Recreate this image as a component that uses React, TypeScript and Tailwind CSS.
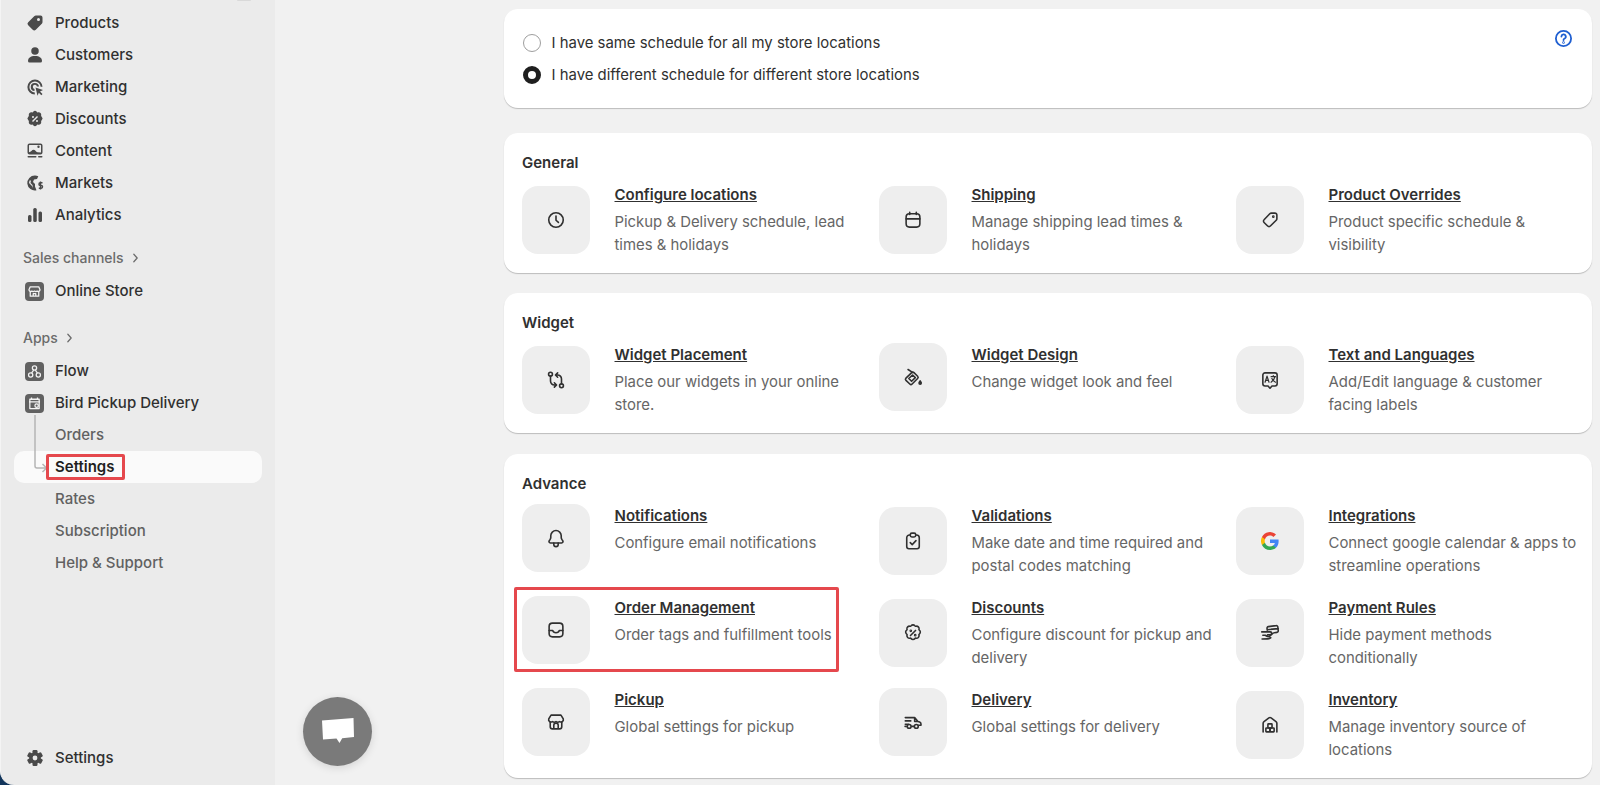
import type { ReactNode } from "react";

// line icons drawn on a 20 box, same weight as the admin icon set
function Line({ children }: { children: ReactNode }) {
  return (
    <svg viewBox="0 0 20 20" className="h-[22px] w-[22px]" fill="none" stroke="#303030" strokeWidth="1.450" strokeLinecap="round" strokeLinejoin="round">
      {children}
    </svg>
  );
}

function Solid({ children }: { children: ReactNode }) {
  return (
    <svg viewBox="0 0 20 20" className="h-5 w-5" fill="#4a4a4a">
      {children}
    </svg>
  );
}

const GoogleIcon = (
  <svg viewBox="0 0 24 24" className="h-[18px] w-[18px]">
    <path fill="#4285F4" d="M23.5 12.3c0-.8-.1-1.600-.2-2.300H12v4.500h6.500a5.500 5.500 0 0 1-2.400 3.600v3h3.900c2.200-2.100 3.500-5.100 3.500-8.800Z" />
    <path fill="#34A853" d="M12 24c3.200 0 6-1.100 8-2.900l-3.900-3c-1.100.7-2.500 1.200-4.100 1.200-3.100 0-5.800-2.100-6.700-5H1.300v3.100A12 12 0 0 0 12 24Z" />
    <path fill="#FBBC05" d="M5.300 14.300a7.200 7.200 0 0 1 0-4.600V6.600h-4a12 12 0 0 0 0 10.800l4-3.100Z" />
    <path fill="#EA4335" d="M12 4.800c1.800 0 3.300.6 4.600 1.800l3.400-3.400A12 12 0 0 0 1.300 6.600l4 3.100c.9-2.800 3.600-4.900 6.700-4.900Z" />
  </svg>
);

const icons: Record<string, ReactNode> = {
  clock: (
    <Line>
      <circle cx="10" cy="10" r="6.600" />
      <path d="M10 6.300v3.900l2.200 2" />
    </Line>
  ),
  calendar: (
    <Line>
      <rect x="3.750" y="4.250" width="12.500" height="12.250" rx="3" />
      <path d="M3.750 9h12.500M7 3v2M13 3v2" />
    </Line>
  ),
  tag: (
    <Line>
      <path d="M11.200 3.750h3.300a1.750 1.750 0 0 1 1.750 1.750v3.300a2 2 0 0 1-.6 1.400l-5.300 5.300a1.750 1.750 0 0 1-2.500 0L4.600 12.250a1.750 1.750 0 0 1 0-2.500l5.200-5.400a2 2 0 0 1 1.400-.6Z" />
      <circle cx="13" cy="7" r=".5" />
    </Line>
  ),
  placement: (
    <Line>
      <circle cx="5" cy="4.750" r="1.750" />
      <circle cx="15" cy="15.250" r="1.750" />
      <path d="M5 6.500v4.500a3.500 3.500 0 0 0 3.500 3.500H10M8.500 12.500l2 2-2 2M15 13.500V9a3.500 3.500 0 0 0-3.500-3.500H10M11.500 3.500l-2 2 2 2" />
    </Line>
  ),
  paint: (
    <Line>
      <path d="M3.600 11 8.800 6a1.500 1.500 0 0 1 2.100 0l3.300 3.300a1.500 1.500 0 0 1 0 2.100l-5 5a1.500 1.500 0 0 1-2.100 0l-3.500-3.300a1.500 1.500 0 0 1 0-2.100Z" />
      <path d="M6.200 11.400 9.600 8.200l2.500 2.400-3.400 3.300ZM5.500 3.200l4.400 2.800" />
      <path d="M16.500 13.500c.6.900 1 1.500 1 2a1 1 0 0 1-2 0c0-.5.400-1.100 1-2Z" fill="#303030" />
    </Line>
  ),
  language: (
    <Line>
      <path d="M5.500 3.500h9a2 2 0 0 1 2 2v8a2 2 0 0 1-2 2h-2.700L10 17.500l-1.800-2H5.500a2 2 0 0 1-2-2v-8a2 2 0 0 1 2-2Z" />
      <path strokeWidth="1.100" d="m5.500 12 1.800-5.500L9.100 12M6.100 10.400h2.400M11 7h4M13 6v1M14.500 7c-.4 2-1.700 3.800-3.500 5M11.700 8.700c.7 1.500 2 2.700 3.300 3.300" />
    </Line>
  ),
  bell: (
    <Line>
      <path d="M10 3.250a4.750 4.750 0 0 0-4.750 4.750v1.600c0 .7-.3 1.300-.7 1.900l-.7 1c-.6.900 0 2 1 2h10.300c1 0 1.600-1.100 1-2l-.7-1c-.4-.6-.7-1.200-.7-1.900V8A4.750 4.750 0 0 0 10 3.250Z" />
      <path d="M8 14.500v1.300a2 2 0 0 0 4 0v-1.300" />
    </Line>
  ),
  clipboard: (
    <Line>
      <path d="M7.500 4.500h-.7a2.500 2.500 0 0 0-2.500 2.500v8a2 2 0 0 0 2 2h7.400a2 2 0 0 0 2-2V7a2.500 2.500 0 0 0-2.500-2.500h-.7" />
      <rect x="7.500" y="2.800" width="5" height="3.500" rx="1.500" />
      <path d="m7.500 11.500 1.800 1.800 3.400-3.600" />
    </Line>
  ),
  badge: (
    <Line>
      <path d="M8.300 3.400a2.300 2.300 0 0 1 3.400 0l.5.500.8-.1a2.300 2.300 0 0 1 2.500 2.500l-.1.700.5.500a2.300 2.300 0 0 1 0 3.400l-.5.500.1.800a2.300 2.300 0 0 1-2.500 2.500l-.8-.1-.5.500a2.300 2.300 0 0 1-3.400 0l-.5-.5-.8.100a2.300 2.300 0 0 1-2.500-2.500l.1-.8-.5-.5a2.300 2.300 0 0 1 0-3.400l.5-.5-.1-.7a2.300 2.300 0 0 1 2.500-2.500l.8.100.5-.5Z" />
      <path d="m12.300 7.700-4.600 4.600" />
      <circle cx="8" cy="8" r=".5" />
      <circle cx="12" cy="12" r=".5" />
    </Line>
  ),
  inbox: (
    <Line>
      <rect x="3.750" y="3.750" width="12.500" height="12.500" rx="3" />
      <path d="M3.750 10.500H7c.4 1.300 1.500 2 3 2s2.600-.7 3-2h3.250" />
    </Line>
  ),
  hand: (
    <Line>
      <path d="M7.500 7.500 7.300 5.800a1.400 1.400 0 0 1 1.200-1.600l7-.9a1.400 1.400 0 0 1 1.600 1.200l.4 3.300a1.400 1.400 0 0 1-1.200 1.600l-2.300.3M7.500 7 17.500 6" />
      <path d="M2.500 9h7.700a1.300 1.300 0 0 1 0 2.600H7.800M3.500 12h2.200l2 1.200h1.800l3.500-3.200M2.800 15.500l4.700-.2c1.200 0 2.200-.4 3.200-1" />
    </Line>
  ),
  store: (
    <Line>
      <path d="M5.500 3.750h9l2.100 3.400a2.200 2.200 0 0 1-3.300 2.500 2.800 2.800 0 0 1-3.300 0 2.800 2.800 0 0 1-3.300 0 2.200 2.200 0 0 1-3.300-2.500l2.100-3.400Z" />
      <path d="M4.750 10v4.250a2 2 0 0 0 2 2h6.500a2 2 0 0 0 2-2V10M8 16.250V13a2 2 0 0 1 4 0v3.250" />
    </Line>
  ),
  truck: (
    <Line>
      <path d="M3 6h8.500l3 3.500 1.500.5c.8.300 1.250 1 1.250 1.800v1.200H15M11.500 6v3.500h3M3 9h5M3 12h3M2.800 14h1M9 14h2" />
      <circle cx="6.500" cy="14" r="1.750" />
      <circle cx="13" cy="14" r="1.750" />
    </Line>
  ),
  warehouse: (
    <Line>
      <path d="M3.750 16.250V8.500a2 2 0 0 1 .8-1.600L9 3.600a1.700 1.700 0 0 1 2 0l4.450 3.300a2 2 0 0 1 .8 1.600v7.750" />
      <rect x="6.250" y="12.750" width="3.750" height="3.500" rx=".5" />
      <rect x="10" y="12.750" width="3.750" height="3.500" rx=".5" />
      <rect x="8.100" y="9" width="3.750" height="3.750" rx=".5" />
    </Line>
  ),
  google: GoogleIcon,
};

type Item = { icon: string; title: string; desc: string };

const general: Item[] = [
  { icon: "clock", title: "Configure locations", desc: "Pickup & Delivery schedule, lead times & holidays" },
  { icon: "calendar", title: "Shipping", desc: "Manage shipping lead times & holidays" },
  { icon: "tag", title: "Product Overrides", desc: "Product specific schedule & visibility" },
];

const widget: Item[] = [
  { icon: "placement", title: "Widget Placement", desc: "Place our widgets in your online store." },
  { icon: "paint", title: "Widget Design", desc: "Change widget look and feel" },
  { icon: "language", title: "Text and Languages", desc: "Add/Edit language & customer facing labels" },
];

const advance: Item[] = [
  { icon: "bell", title: "Notifications", desc: "Configure email notifications" },
  { icon: "clipboard", title: "Validations", desc: "Make date and time required and postal codes matching" },
  { icon: "google", title: "Integrations", desc: "Connect google calendar & apps to streamline operations" },
  { icon: "inbox", title: "Order Management", desc: "Order tags and fulfillment tools" },
  { icon: "badge", title: "Discounts", desc: "Configure discount for pickup and delivery" },
  { icon: "hand", title: "Payment Rules", desc: "Hide payment methods conditionally" },
  { icon: "store", title: "Pickup", desc: "Global settings for pickup" },
  { icon: "truck", title: "Delivery", desc: "Global settings for delivery" },
  { icon: "warehouse", title: "Inventory", desc: "Manage inventory source of locations" },
];

const navTop: { label: string; icon: ReactNode }[] = [
  {
    label: "Products",
    icon: (
      <Solid>
        <path d="M11 2.500h4.500A2 2 0 0 1 17.500 4.500V9a2.500 2.500 0 0 1-.7 1.800l-6 6a2.200 2.200 0 0 1-3.100 0l-4.500-4.500a2.200 2.200 0 0 1 0-3.100l6-6A2.500 2.500 0 0 1 11 2.500Zm2.500 5.500a1.500 1.500 0 1 0 0-3 1.500 1.500 0 0 0 0 3Z" fillRule="evenodd" />
      </Solid>
    ),
  },
  {
    label: "Customers",
    icon: (
      <Solid>
        <circle cx="10" cy="6" r="3.750" />
        <path d="M3 16c0-3 2.500-5 7-5s7 2 7 5a1.500 1.500 0 0 1-1.500 1.500h-11A1.500 1.500 0 0 1 3 16Z" />
      </Solid>
    ),
  },
  {
    label: "Marketing",
    icon: (
      <Solid>
        <path d="M10 2.500a7.500 7.500 0 0 1 7.500 7.300h-1.900A5.600 5.600 0 1 0 9.800 15.600v1.900A7.500 7.500 0 0 1 10 2.500Z" />
        <path d="M10 6a4 4 0 0 1 4 3.500h-2A2.100 2.100 0 1 0 9.500 12v2A4 4 0 0 1 10 6Z" />
        <path d="m10.500 10.500 7.500 2.500-3 1.500 2.500 2.500-1.200 1.200-2.500-2.500-1.300 3-2-8.200Z" />
      </Solid>
    ),
  },
  {
    label: "Discounts",
    icon: (
      <Solid>
        <path fillRule="evenodd" d="M8.200 2.800a2.500 2.500 0 0 1 3.600 0l.6.600.9-.1a2.500 2.500 0 0 1 2.900 2.900l-.1.900.6.600a2.500 2.500 0 0 1 0 3.600l-.6.600.1.900a2.500 2.500 0 0 1-2.900 2.900l-.9-.1-.6.600a2.500 2.500 0 0 1-3.600 0l-.6-.6-.9.100a2.500 2.500 0 0 1-2.900-2.900l.1-.9-.6-.6a2.500 2.500 0 0 1 0-3.600l.6-.6-.1-.9a2.500 2.500 0 0 1 2.900-2.900l.9.100.6-.6ZM12 7l-5 5 1 1 5-5-1-1ZM8 9a1 1 0 1 0 0-2 1 1 0 0 0 0 2Zm4 4a1 1 0 1 0 0-2 1 1 0 0 0 0 2Z" />
      </Solid>
    ),
  },
  {
    label: "Content",
    icon: (
      <Solid>
        <path fillRule="evenodd" d="M4.500 2.500h11A2 2 0 0 1 17.500 4.500v7a2 2 0 0 1-2 2h-11a2 2 0 0 1-2-2v-7a2 2 0 0 1 2-2ZM4 11.300c2-.3 3-2.500 4.500-2.500 1.700 0 2.300 2 4 2.500l3.500.2V4.500a.5.500 0 0 0-.5-.5h-11a.5.500 0 0 0-.5.500v6.800Zm9.500-4.300a1.200 1.200 0 1 0 0-2.400 1.200 1.200 0 0 0 0 2.400Z" />
        <rect x="2.500" y="15" width="9" height="1.500" rx=".75" />
        <rect x="13" y="15" width="4.500" height="1.500" rx=".75" />
      </Solid>
    ),
  },
  {
    label: "Markets",
    icon: (
      <Solid>
        <path fillRule="evenodd" d="M10 2.500a7.500 7.500 0 0 1 3.300.8L12 6 9 6.500 8 9l2 2v2.500l1.500 3.800A7.500 7.500 0 1 1 10 2.500ZM4.500 7.500 4 10l3 3 1 2-.5-3-2-2 .5-2.500h-1.500Z" />
        <path fill="none" stroke="#4a4a4a" strokeWidth="1.400" d="M17.500 9.800h-2.200a1.200 1.200 0 0 0 0 2.700h.9a1.200 1.200 0 0 1 0 2.700h-2.400M15.500 8.500v8" />
      </Solid>
    ),
  },
  {
    label: "Analytics",
    icon: (
      <Solid>
        <rect x="3" y="10" width="3.500" height="7" rx="1.500" />
        <rect x="8.250" y="3" width="3.500" height="14" rx="1.500" />
        <rect x="13.500" y="6.500" width="3.500" height="10.500" rx="1.500" />
      </Solid>
    ),
  },
];

function Tile({ children }: { children: ReactNode }) {
  return (
    <span className="flex h-[19px] w-[19px] items-center justify-center rounded-[4px] bg-[#616161]">
      <svg viewBox="0 0 20 20" className="h-[17px] w-[17px]" fill="none" stroke="#f3f3f3" strokeWidth="1.500" strokeLinejoin="round">
        {children}
      </svg>
    </span>
  );
}

function NavRow({ icon, label }: { icon: ReactNode; label: string }) {
  return (
    <div className="flex h-8 items-center pl-6">
      <span className="flex w-[30px] items-center">{icon}</span>
      <span className="text-[15px] font-medium text-[#303030]">{label}</span>
    </div>
  );
}

function SubRow({ label }: { label: string }) {
  return <div className="flex h-8 items-center pl-[54px] text-[15px] font-medium text-[#616161]">{label}</div>;
}

function SectionLabel({ label }: { label: string }) {
  return (
    <div className="flex h-8 items-center gap-2 pb-[3px] pl-[22px] text-sm font-medium text-[#6b6b6b]">
      {label}
      <svg viewBox="0 0 8 12" className="h-[10px] w-[7px]" fill="none" stroke="#6b6b6b" strokeWidth="1.500" strokeLinecap="round" strokeLinejoin="round">
        <path d="m2 1.500 4 4.500-4 4.500" />
      </svg>
    </div>
  );
}

function Sidebar() {
  return (
    <aside className="relative flex h-full w-[275px] shrink-0 flex-col rounded-bl-[14px] border-l border-[#f4f4f4] bg-[#ebebeb] pt-[7px] pb-[11px]">
      {navTop.map((n) => (
        <NavRow key={n.label} icon={n.icon} label={n.label} />
      ))}
      <div className="mt-3">
        <SectionLabel label="Sales channels" />
      </div>
      <NavRow
        label="Online Store"
        icon={
          <Tile>
            <path d="M5 4.500h10l1.500 3.500a2 2 0 0 1-3.300 1.500 2.400 2.400 0 0 1-3.200 0 2.400 2.400 0 0 1-3.200 0A2 2 0 0 1 3.500 8L5 4.500ZM5 10.500v5h10v-5M8.500 15.500V12.500h3v3" />
          </Tile>
        }
      />
      <div className="mt-4">
        <SectionLabel label="Apps" />
      </div>
      <NavRow
        label="Flow"
        icon={
          <Tile>
            <circle cx="10" cy="6" r="2.500" />
            <circle cx="5.500" cy="14" r="2.500" />
            <circle cx="14.500" cy="14" r="2.500" />
            <path d="M9 8.500 6.500 11.800M11 8.500l2.500 3.300" />
          </Tile>
        }
      />
      <NavRow
        label="Bird Pickup Delivery"
        icon={
          <Tile>
            <path d="M3.500 8h13M6.500 3v2.500M13.500 3v2.500M4.500 5h11v11h-11z" />
            <circle cx="12.500" cy="12.500" r="2" />
          </Tile>
        }
      />
      <SubRow label="Orders" />
      <div className="mx-[13px] flex h-8 items-center rounded-[10px] bg-[#fafafa] pl-[41px] text-[15px] font-semibold text-[#1f1f1f]">
        Settings
      </div>
      <SubRow label="Rates" />
      <SubRow label="Subscription" />
      <SubRow label="Help & Support" />
      <div className="mt-auto">
        <NavRow
          label="Settings"
          icon={
            <Solid>
              <rect x="7.500" y="2" width="5" height="16" rx="1.200" />
              <rect x="7.500" y="2" width="5" height="16" rx="1.200" transform="rotate(60 10 10)" />
              <rect x="7.500" y="2" width="5" height="16" rx="1.200" transform="rotate(120 10 10)" />
              <circle cx="10" cy="10" r="5.800" />
              <circle cx="10" cy="10" r="2.400" fill="#ebebeb" />
            </Solid>
          }
        />
      </div>
      {/* little arrow from the app tile down to the current page */}
      <svg className="absolute top-[414px] left-[32px] h-[60px] w-[16px]" viewBox="0 0 16 60" fill="none" stroke="#b5b5b5" strokeWidth="1.500">
        <path d="M2 1v51a2 2 0 0 0 2 2h9M9.500 50l4 4-4 4" />
      </svg>
      <div className="absolute top-[454px] left-[45px] h-[26px] w-[79px] rounded-[2px] border-[3px] border-[#e5484d]" />
      <div className="absolute top-0 left-[236px] h-[1px] w-[14px] rounded-b bg-[#d9d9d9]" />
    </aside>
  );
}

function ToolCard({ icon, title, desc }: Item) {
  return (
    <div className="flex items-center gap-[24.5px]">
      <div className="flex h-[68px] w-[68px] shrink-0 items-center justify-center rounded-2xl bg-[#eeeeee]">{icons[icon]}</div>
      <div className="w-[250px] self-start">
        <a className="block h-6 text-[15px] leading-6 font-semibold text-[#303030] underline">{title}</a>
        <p className="mt-1 text-[14.900px] leading-[23px] text-[#666666]">{desc}</p>
      </div>
    </div>
  );
}

function Section({ title, items }: { title: string; items: Item[] }) {
  return (
    <section className="rounded-[14px] bg-white pt-[19px] pr-0 pb-4 pl-[18px] shadow-[0_1px_1px_rgba(0,0,0,0.22)]">
      <h2 className="mb-[9px] text-[15px] leading-[22px] font-semibold text-[#303030]">{title}</h2>
      <div className="grid grid-cols-[357px_357px_1fr] items-start gap-y-[18px]">
        {items.map((it) => (
          <ToolCard key={it.title} {...it} />
        ))}
      </div>
    </section>
  );
}

export default function App() {
  return (
    <div className="relative flex h-screen overflow-hidden bg-[#12355b] font-['Inter',sans-serif]">
      <Sidebar />
      <main className="flex h-full flex-1 flex-col gap-5 overflow-hidden bg-[#f1f1f1] pt-[9px] pr-2 pl-[229px]">
        <section className="relative mb-[5px] flex h-[99px] shrink-0 flex-col justify-center gap-[13px] rounded-[14px] bg-white pt-px pl-[19px] shadow-[0_1px_1px_rgba(0,0,0,0.22)]">
          <label className="flex items-center gap-[10.500px] text-[14.900px] leading-[19px] text-[#303030]">
            <span className="h-[18px] w-[18px] rounded-full border border-[#9e9e9e] bg-white" />I have same schedule for all my store locations
          </label>
          <label className="flex items-center gap-[10.500px] text-[14.900px] leading-[19px] text-[#303030]">
            <span className="h-[18px] w-[18px] rounded-full border-[5px] border-[#1f1f1f] bg-white" />I have different schedule for different store locations
          </label>
          <svg viewBox="0 0 20 20" className="absolute top-5 right-[19px] h-[19px] w-[19px]" fill="none" stroke="#1f5fd1" strokeWidth="1.900" strokeLinecap="round">
            <circle cx="10" cy="10" r="8" />
            <path d="M7.800 8a2.300 2.300 0 1 1 3.400 2c-.8.400-1.200.9-1.200 1.600" />
            <circle cx="10" cy="14.200" r=".4" />
          </svg>
        </section>
        <Section title="General" items={general} />
        <Section title="Widget" items={widget} />
        <div className="mt-px">
          <Section title="Advance" items={advance} />
        </div>
      </main>
      <div className="absolute top-[587px] left-[514px] h-[85px] w-[325px] rounded-[2px] border-[3px] border-[#e5484d]" />
      <button className="absolute top-[697px] left-[303px] flex h-[69px] w-[69px] items-center justify-center rounded-full bg-[#7a7a7a] shadow-[0_2px_8px_rgba(0,0,0,0.12)]">
        <svg viewBox="0 0 34 30" className="h-[30px] w-[34px]" fill="#ffffff">
          <path d="M1 3.500 32.500 1 33 20l-11.800 1.200L18.500 26l-3-4.600L2 22.500Z" />
        </svg>
      </button>
    </div>
  );
}
